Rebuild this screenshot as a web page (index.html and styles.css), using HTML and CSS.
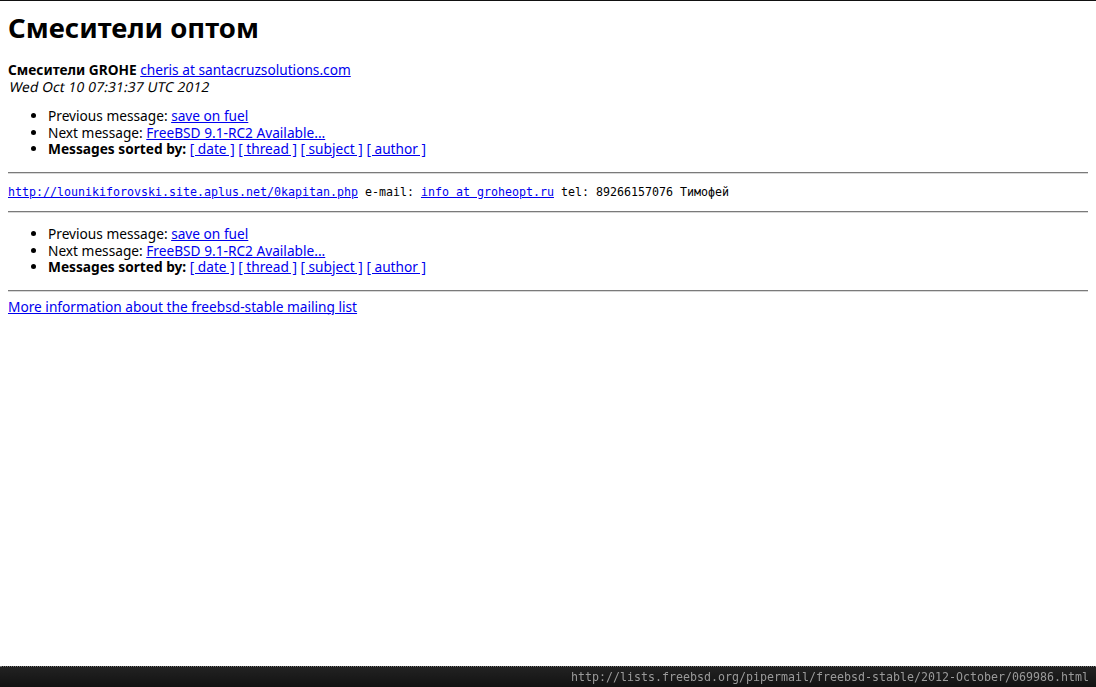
FILE: index.html
```
<!DOCTYPE html>
<html lang="ru">
<head>
    <meta charset="UTF-8">
    <title>Смесители оптом</title>
    <link rel="stylesheet" href="styles.css">
</head>
<body>
    <h1 class="subject">Смесители оптом</h1>
    <div class="sender">
        <b>Смесители GROHE</b>
        <a href="#">cheris at santacruzsolutions.com</a><br>
        <i class="date">Wed Oct 10 07:31:37 UTC 2012</i>
    </div>

    <ul class="nav">
        <li>Previous message: <a href="#">save on fuel</a></li>
        <li>Next message: <a href="#">FreeBSD 9.1-RC2 Available...</a></li>
        <li><b>Messages sorted by:</b>
            <a href="#">[ date ]</a>
            <a href="#">[ thread ]</a>
            <a href="#">[ subject ]</a>
            <a href="#">[ author ]</a>
        </li>
    </ul>

    <hr>
    <pre class="body"><a href="#">http://lounikiforovski.site.aplus.net/0kapitan.php</a> e-mail: <a href="#">info at groheopt.ru</a> tel: 89266157076 Тимофей</pre>
    <hr>

    <ul class="nav">
        <li>Previous message: <a href="#">save on fuel</a></li>
        <li>Next message: <a href="#">FreeBSD 9.1-RC2 Available...</a></li>
        <li><b>Messages sorted by:</b>
            <a href="#">[ date ]</a>
            <a href="#">[ thread ]</a>
            <a href="#">[ subject ]</a>
            <a href="#">[ author ]</a>
        </li>
    </ul>

    <hr>
    <a href="#">More information about the freebsd-stable mailing list</a>

    <div class="status">http://lists.freebsd.org/pipermail/freebsd-stable/2012-October/069986.html</div>
</body>
</html>
```

FILE: styles.css
```
html {
    border-top: 1px solid #111;
}
body {
    margin: 8px;
    font-family: "Noto Sans", "Open Sans", sans-serif;
    font-size: 13.7px;
    line-height: 16.5px;
    color: #000;
    background: #fff;
}
a {
    color: #0000ee;
}
h1 {
    font-size: 27.5px;
    line-height: 33px;
    margin: 1.5px 0 18.5px;
}
/* slanted regular face, wider than the real italic */
.date {
    display: inline-block;
    font-style: normal;
    letter-spacing: 0.15px;
    transform: skewX(-11deg);
    transform-origin: left bottom;
}
.nav {
    margin: 13px 0 14px;
    padding-left: 40px;
}
hr {
    height: 0;
    margin: 7px 0;
    border: none;
    border-top: 1px solid #7a7a7a;
    border-bottom: 1px solid #d8d8d8;
}
pre.body {
    font-family: "DejaVu Sans Mono", monospace;
    font-size: 11.63px;
    line-height: 13.5px;
    margin: 12.5px 0 11.5px;
}
.status {
    position: fixed;
    left: 0;
    right: 0;
    bottom: 0;
    height: 20px;
    padding-right: 7px;
    border-top: 1px dotted #777;
    background: linear-gradient(#222, #121212);
    color: #9a9a9a;
    font-family: "DejaVu Sans Mono", monospace;
    font-size: 11.63px;
    line-height: 20px;
    text-align: right;
}
```
